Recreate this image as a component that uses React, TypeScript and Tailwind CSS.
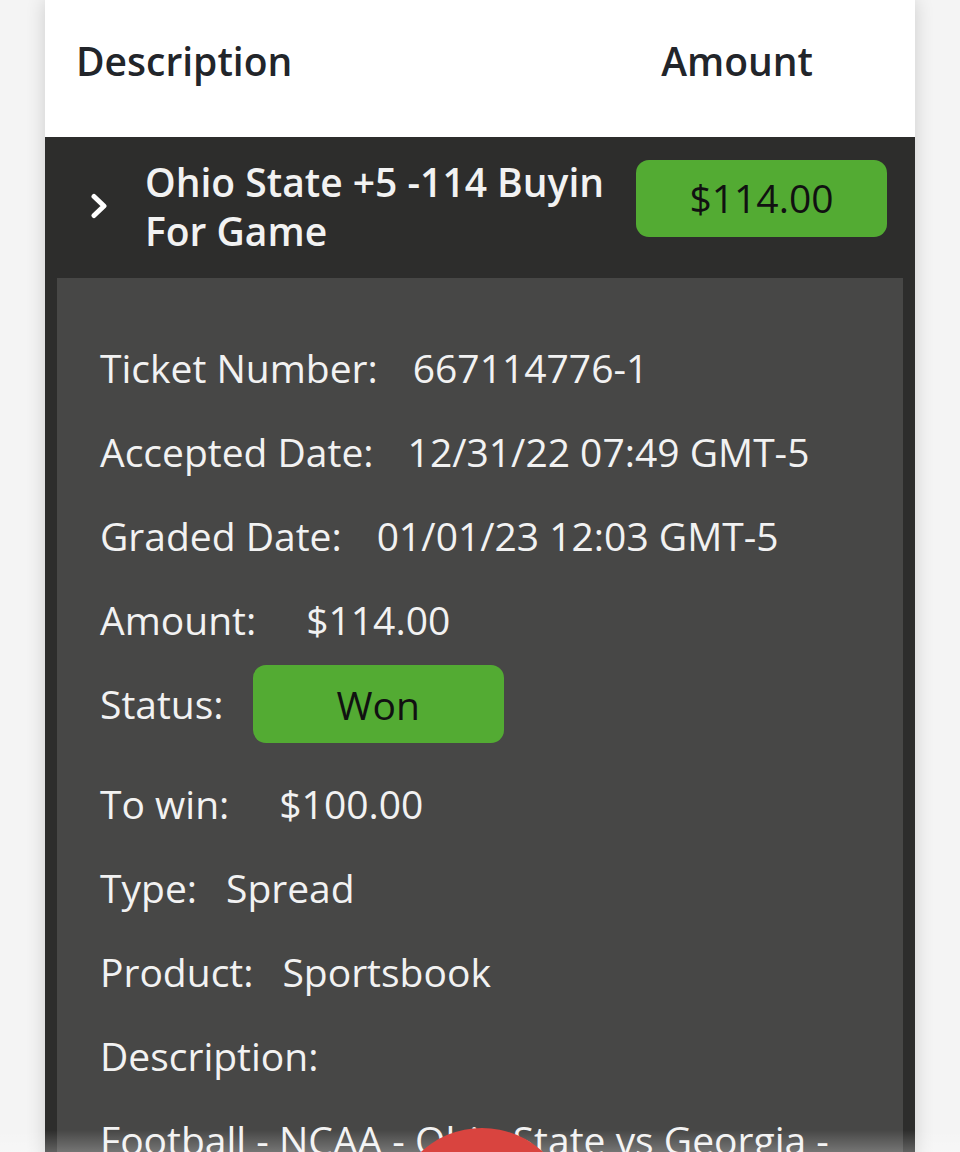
import React from "react";

type Row = { label: string; value: string; gap: string };

const rows: Row[] = [
  { label: "Ticket Number:", value: "667114776-1", gap: "gap-[35px]" },
  { label: "Accepted Date:", value: "12/31/22 07:49 GMT-5", gap: "gap-[34px]" },
  { label: "Graded Date:", value: "01/01/23 12:03 GMT-5", gap: "gap-[35px]" },
  { label: "Amount:", value: "$114.00", gap: "gap-[50px]" },
];

const rowsAfter: Row[] = [
  { label: "To win:", value: "$100.00", gap: "gap-[50px]" },
  { label: "Type:", value: "Spread", gap: "gap-[29px]" },
  { label: "Product:", value: "Sportsbook", gap: "gap-[29px]" },
];

function DetailRow({ label, value, gap }: Row) {
  return (
    <div className={`flex h-[84px] items-center leading-[84px] ${gap}`}>
      <span>{label}</span>
      <span>{value}</span>
    </div>
  );
}

export default function App() {
  return (
    <div
      className="relative h-[1152px] w-full overflow-hidden bg-[#f4f4f4]"
      style={{ fontFamily: '"Open Sans", "Noto Sans", sans-serif' }}
    >
      {/* Card */}
      <div className="mx-[45px] w-[870px] bg-white shadow-[0_0_18px_rgba(0,0,0,0.16)]">
        {/* Table header */}
        <div className="flex h-[137px] items-center justify-between pb-[14px] pl-[31px] pr-[102px] text-[39px] font-semibold text-[#22252a]">
          <span>Description</span>
          <span>Amount</span>
        </div>

        {/* Expanded bet row */}
        <div className="bg-[#2d2d2c] pb-[12px]">
          <div className="flex h-[141px] items-start pl-[45px] pr-[28px] pt-[20px]">
            <svg
              width="18"
              height="26"
              viewBox="0 0 18 26"
              className="mt-[36px] shrink-0"
              fill="none"
              stroke="white"
              strokeWidth="5"
              strokeLinecap="round"
              strokeLinejoin="round"
            >
              <path d="M4 3.5l10 9.5-10 9.5" />
            </svg>
            <div className="ml-[37px] flex-1 text-[39px] font-semibold leading-[49px] text-[#f2f2f2]">
              Ohio State +5 -114 Buyin
              <br />
              For Game
            </div>
            <div className="mt-[3px] flex h-[77px] w-[251px] shrink-0 items-center justify-center rounded-[13px] bg-[#53ab33] text-[39px] text-[#111]">
              $114.00
            </div>
          </div>

          {/* Details panel */}
          <div className="mx-[12px] bg-[#474746] pl-[43px] pt-[48px] pb-[40px] text-[39px] text-[#f2f2f2]">
            {rows.map((r) => (
              <DetailRow key={r.label} {...r} />
            ))}
            <div className="flex h-[100px] items-start gap-[29px] leading-[84px]">
              <span>Status:</span>
              <span className="mt-[3px] flex h-[78px] w-[251px] items-center justify-center rounded-[13px] bg-[#53ab33] leading-none text-[#111]">
                Won
              </span>
            </div>
            {rowsAfter.map((r) => (
              <DetailRow key={r.label} {...r} />
            ))}
            <div className="h-[84px] leading-[84px]">Description:</div>
            <div className="leading-[84px]">Football - NCAA - Ohio State vs Georgia -</div>
          </div>
        </div>
      </div>

      {/* Bottom bar fade */}
      <div className="absolute bottom-0 left-0 right-0 h-[22px] bg-gradient-to-b from-white/0 to-white/25" />

      {/* Floating action button */}
      <div className="absolute left-[392px] top-[1128px] h-[180px] w-[180px] rounded-full bg-[#d9443f]" />
    </div>
  );
}
